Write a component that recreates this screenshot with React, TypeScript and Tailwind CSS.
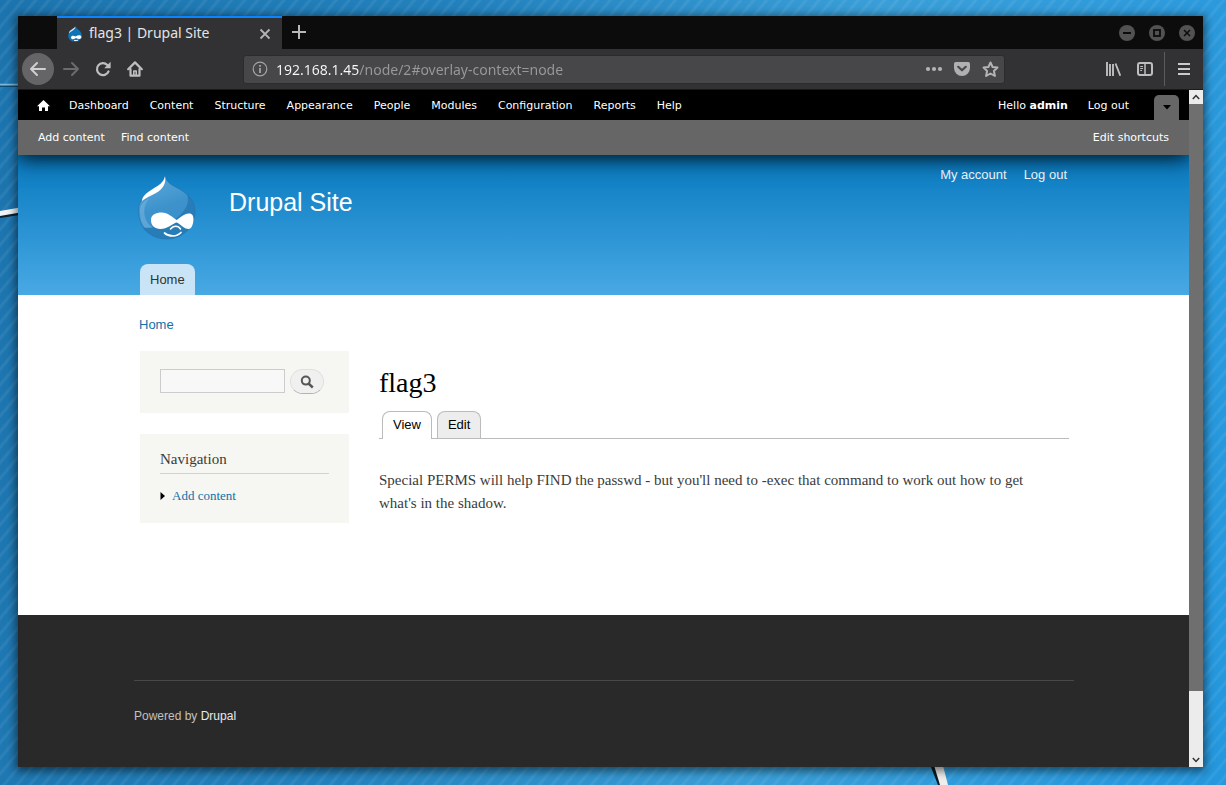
import type { ReactNode } from "react";

const adminLinks = ["Dashboard", "Content", "Structure", "Appearance", "People", "Modules", "Configuration", "Reports", "Help"];

function Desktop() {
  return (
    <div aria-hidden="true" className="absolute inset-0 -z-10 overflow-hidden bg-[linear-gradient(100deg,#1c74ae_0%,#2382be_35%,#3a9fd8_65%,#2497de_100%)]">
      <div className="absolute inset-0 bg-[repeating-linear-gradient(130deg,rgba(255,255,255,0)_0px,rgba(255,255,255,0)_5px,rgba(255,255,255,0.07)_7px,rgba(255,255,255,0.07)_8px,rgba(255,255,255,0)_10px)]" />
      <svg className="absolute top-0 left-0" width="40" height="230" viewBox="0 0 40 230">
        <path d="M0 84.500 H40" stroke="#7db9dc" strokeWidth="1.500" />
        <path d="M0 86.500 H40" stroke="#0d4a74" strokeWidth="1" />
        <path d="M0 215 L40 209 V212 L0 218 Z" fill="#0a2233" />
        <path d="M0 211 L40 204 V209 L0 216 Z" fill="#f4f4f4" />
      </svg>
      <svg className="absolute bottom-0 left-[920px]" width="40" height="30" viewBox="0 0 40 30">
        <path d="M9 7 L18 30 H24 L14 7 Z" fill="#0a1a26" />
        <path d="M13 7 L20 30 H28 L22 7 Z" fill="#f1efee" />
      </svg>
    </div>
  );
}

function Favicon() {
  return (
    <svg width="16" height="16" viewBox="0 0 16 16">
      <path d="M8.500 0.500 C9 2.500 14.800 4.600 14.800 9.400 C14.800 13.200 11.800 15.600 8 15.600 C4.200 15.600 1.200 13.200 1.200 9.400 C1.200 5 7.500 3.800 8.500 .5 Z" fill="#0f73b8" />
      <path d="M8.300 .6 C8.800 4 5 4.400 2 7.400 C2 3.800 7.200 3 8.300 .6 Z" fill="#d5ebf8" />
      <path d="M4 11.400 C4 9.400 6.600 9.200 8.600 10.400 C11 9 14.400 8.800 14.400 11 C14.400 13.400 11.400 13.400 9 12 C7 13.600 4 13.600 4 11.400 Z" fill="#fff" />
      <path d="M7 14.200 C8.200 14.800 10 14.800 11.200 14" stroke="#fff" fill="none" />
    </svg>
  );
}

function DrupalLogo() {
  return (
    <svg width="60" height="66" viewBox="0 0 60 66">
      <defs>
        <linearGradient id="drop" x1="0.3" y1="0" x2="0.6" y2="1">
          <stop offset="0" stopColor="#5aa7d8" />
          <stop offset="0.5" stopColor="#3d92cc" />
          <stop offset="1" stopColor="#3a90ca" />
        </linearGradient>
      </defs>
      <path d="M28 2 C29 9 37 12 44 16 C52 21 58 28 58 37 C58 54 45 65 29.500 65 C14 65 1.500 54 1.500 37 C1.500 29 5 24 10 20 C17 14 26 11 28 2 Z" fill="url(#drop)" stroke="#2073ab" strokeOpacity="0.6" />
      <path d="M50 20 C55 25 58 30 58 37 C58 54 45 65 29.500 65 C19 65 10 60 5.500 53 C18 54 32 51 41 43 C49 36 53 28 50 20 Z" fill="#2173ae" fillOpacity="0.7" />
      <path d="M3 36 C2.500 43 4 49 8 54 H16 C9 49 6.500 42 7.500 34 C8 30 10 27 13 24 C6 27 3 31 3 36 Z" fill="#8cc4e6" fillOpacity="0.4" />
      <path d="M28 2 C29.500 9 26 15 19 19 C14 22 9 23.500 5 27 C5 21 12 17.500 18 13.500 C24 10 27 7 28 2 Z" fill="#fff" />
      <path d="M14 46 C14 40.500 19 38.500 24.500 38.500 C31 38.500 35 43 39.500 46 C44 43 47 40 51.500 39.500 C55 39 56.500 41.500 56.500 45 C56.500 50 54.500 55 51.500 55 C47 55 43 49.500 39.500 48.500 C36 49.500 30 55 23.500 55 C17.500 55 14 51.500 14 46 Z" fill="#fff" />
      <path d="M33.500 55 C36 51.500 41 51 43.500 55" fill="none" stroke="#fff" strokeWidth="1.500" strokeLinecap="round" />
      <path d="M27.500 59 C32 63 40 63 44 58.500" fill="none" stroke="#fff" strokeWidth="1.700" strokeLinecap="round" />
    </svg>
  );
}

function IconButton({ label, className, children }: { label: string; className?: string; children: ReactNode }) {
  return (
    <button type="button" aria-label={label} className={`flex h-8 w-8 shrink-0 items-center justify-center ${className ?? ""}`}>
      {children}
    </button>
  );
}

function TabStrip() {
  return (
    <div className="flex h-[33px] bg-[#0c0c0d] pl-[39px]">
      <div className="flex w-[225px] items-center border-t-2 border-[#0a84ff] bg-[#323234] pl-[10px]">
        <Favicon />
        <span className="ml-[6px] flex-1 pb-[2px] text-[14px] leading-5 text-[#e4e4e6]">flag3 | Drupal Site</span>
        <IconButton label="Close tab" className="mr-px">
          <svg width="12" height="12" viewBox="0 0 12 12" stroke="#b4b4b6" strokeWidth="1.800"><path d="M1.500 1.500 L10.500 10.500 M10.500 1.500 L1.500 10.500" /></svg>
        </IconButton>
      </div>
      <IconButton label="New tab" className="ml-px">
        <svg width="16" height="16" viewBox="0 0 16 16" stroke="#b8b8ba" strokeWidth="2"><path d="M8 1 V15 M1 8 H15" /></svg>
      </IconButton>
      <div className="mr-2 ml-auto flex items-center gap-[14px]">
        <button type="button" aria-label="Minimize" className="h-4 w-4">
          <svg width="16" height="16" viewBox="0 0 16 16"><circle cx="8" cy="8" r="8" fill="#525253" /><path d="M4 8 H12" stroke="#0c0c0d" strokeWidth="2" /></svg>
        </button>
        <button type="button" aria-label="Maximize" className="h-4 w-4">
          <svg width="16" height="16" viewBox="0 0 16 16"><circle cx="8" cy="8" r="8" fill="#525253" /><rect x="5" y="5" width="6" height="6" fill="none" stroke="#0c0c0d" strokeWidth="1.800" /></svg>
        </button>
        <button type="button" aria-label="Close" className="h-4 w-4">
          <svg width="16" height="16" viewBox="0 0 16 16"><circle cx="8" cy="8" r="8" fill="#525253" /><path d="M5 5 L11 11 M11 5 L5 11" stroke="#0c0c0d" strokeWidth="1.500" /></svg>
        </button>
      </div>
    </div>
  );
}

function NavBar() {
  return (
    <div className="flex h-[41px] items-center border-b border-[#1a1a1c] bg-[#323234] pr-[3px] pl-1">
      <button type="button" aria-label="Back" className="flex h-8 w-8 shrink-0 items-center justify-center rounded-full bg-[#656567]">
        <svg width="18" height="16" viewBox="0 0 18 16" fill="none" stroke="#cfcfd1" strokeWidth="2" strokeLinecap="round" strokeLinejoin="round"><path d="M16 8 H2 M8 2 L2 8 L8 14" /></svg>
      </button>
      <IconButton label="Forward" className="ml-px">
        <svg width="18" height="16" viewBox="0 0 18 16" fill="none" stroke="#6c6c6f" strokeWidth="2" strokeLinecap="round" strokeLinejoin="round"><path d="M2 8 H16 M10 2 L16 8 L10 14" /></svg>
      </IconButton>
      <IconButton label="Reload">
        <svg width="16" height="16" viewBox="0 0 16 16"><path d="M13.500 10.500 A6 6 0 1 1 12.300 4" fill="none" stroke="#bebec0" strokeWidth="2.200" strokeLinecap="round" /><path d="M15.600 .8 V7.200 H9.200 Z" fill="#bebec0" /></svg>
      </IconButton>
      <IconButton label="Home">
        <svg width="16" height="16" viewBox="0 0 16 16" fill="none" stroke="#bebec0" strokeWidth="2.200" strokeLinejoin="round" strokeLinecap="round"><path d="M1.200 8.200 L8 1.400 L14.800 8.200" /><path d="M3.500 8 V14.700 H12.500 V8" /><path d="M6.800 14.500 V10 H9.200 V14.500" strokeWidth="1.600" /></svg>
      </IconButton>
      <div className="mr-[92px] ml-[92px] flex h-[29px] flex-1 items-center rounded-[3px] border border-[#2b2b2d] bg-[#474749] pl-2">
        <svg width="16" height="16" viewBox="0 0 16 16" fill="none" stroke="#a3a3a5"><circle cx="8" cy="8" r="6.800" strokeWidth="1.200" /><path d="M8 7 V12 M8 4 V5.800" strokeWidth="1.800" /></svg>
        <input
          type="text"
          aria-label="Address"
          defaultValue="192.168.1.45/node/2#overlay-context=node"
          className="ml-2 min-w-0 flex-1 bg-[linear-gradient(to_right,#f9f9fa_83px,#99999c_83px)] bg-clip-text text-[14px] text-transparent outline-none"
        />
        <div className="flex">
          <button type="button" aria-label="Page actions" className="flex h-7 w-7 items-center justify-center">
            <svg width="18" height="16" viewBox="0 0 18 16" fill="#b4b4b7"><circle cx="3" cy="8" r="2.100" /><circle cx="9" cy="8" r="2.100" /><circle cx="15" cy="8" r="2.100" /></svg>
          </button>
          <button type="button" aria-label="Save to Pocket" className="flex h-7 w-7 items-center justify-center">
            <svg width="16" height="16" viewBox="0 0 16 16"><path d="M1.800 1 H14.200 A1.800 1.800 0 0 1 16 2.800 V7 A8 8 0 0 1 0 7 V2.800 A1.800 1.800 0 0 1 1.800 1 Z" fill="#b0b0b3" /><path d="M4.200 5.800 L8 9.300 L11.800 5.800" fill="none" stroke="#474749" strokeWidth="2.200" strokeLinecap="round" strokeLinejoin="round" /></svg>
          </button>
          <button type="button" aria-label="Bookmark this page" className="flex h-7 w-7 items-center justify-center">
            <svg width="17" height="17" viewBox="0 0 17 17"><path d="M8.500 1.500 L10.600 6 L15.500 6.600 L11.900 10 L12.900 15 L8.500 12.500 L4.100 15 L5.100 10 L1.500 6.600 L6.400 6 Z" fill="none" stroke="#b4b4b7" strokeWidth="2" strokeLinejoin="round" /></svg>
          </button>
        </div>
      </div>
      <IconButton label="Library">
        <svg width="16" height="16" viewBox="0 0 16 16" stroke="#bebec0" strokeWidth="1.900"><path d="M2 1 V15 M5 3 V15 M8 3 V15 M10.500 2.500 L15.300 14.700" /></svg>
      </IconButton>
      <IconButton label="Sidebars">
        <svg width="16" height="16" viewBox="0 0 16 16" fill="none" stroke="#bebec0"><rect x="1" y="2" width="14" height="12" rx="2" strokeWidth="2" /><path d="M8 2 V14" strokeWidth="1.500" /><path d="M3.200 5.500 H6 M3.200 7.500 H6 M3.200 9.500 H5" strokeWidth="1" /></svg>
      </IconButton>
      <div className="mx-[3px] h-[34px] w-px bg-[#5c5c5f]" />
      <IconButton label="Menu">
        <svg width="12" height="14" viewBox="0 0 12 14" stroke="#cacacc" strokeWidth="2"><path d="M0 2 H12 M0 7 H12 M0 12 H12" /></svg>
      </IconButton>
    </div>
  );
}

function AdminToolbar() {
  return (
    <div className="relative z-10 font-['DejaVu_Sans',sans-serif] text-[11px] leading-4 text-white shadow-[0_3px_20px_rgba(0,0,0,0.9)]">
      <div className="flex h-[30px] items-center bg-black px-[10px] pt-px">
        <a href="#home" aria-label="Home" className="px-[9px]">
          <svg width="13" height="11" viewBox="0 0 13 11" fill="#fff"><path d="M6.500 0 L13 6.200 H11 V11 H8 V7.500 H5 V11 H2 V6.200 H0 Z" /></svg>
        </a>
        <nav className="flex flex-1 gap-[21px] pl-[10px]">
          {adminLinks.map((name) => (
            <a key={name} href="#admin">{name}</a>
          ))}
        </nav>
        <a href="#user" className="px-[10px]">Hello <b>admin</b></a>
        <a href="#logout" className="px-[10px]">Log out</a>
        <button type="button" aria-label="Hide shortcuts" className="ml-[15px] flex h-[25px] w-[25px] items-center justify-center self-end rounded-t-[5px] bg-[#666]">
          <svg width="8" height="5" viewBox="0 0 8 5"><path d="M0 0 H8 L4 4.500 Z" fill="#000" /></svg>
        </button>
      </div>
      <div className="flex h-[35px] items-center gap-4 bg-[#666] px-5">
        <a href="#add">Add content</a>
        <a href="#find">Find content</a>
        <a href="#shortcuts" className="ml-auto">Edit shortcuts</a>
      </div>
    </div>
  );
}

function SiteHeader() {
  return (
    <header className="bg-[linear-gradient(to_bottom,#0779bf,#48a9e4)] font-['Liberation_Sans',sans-serif]">
      <div className="mx-auto flex h-[140px] w-full max-w-[941px] flex-col justify-between pr-[7px] pl-1">
        <div className="flex items-start">
          <a href="#front" aria-label="Drupal Site home" className="mt-[19px]"><DrupalLogo /></a>
          <a href="#front" className="mt-8 ml-8 text-[25px] leading-[30px] text-[#fffeff]">Drupal Site</a>
          <nav className="mt-[10px] ml-auto flex gap-[17px] text-[13px] leading-5 text-[#f4fbff]">
            <a href="#account">My account</a>
            <a href="#logout">Log out</a>
          </nav>
        </div>
        <nav className="flex pl-[3px]">
          <a href="#front" className="rounded-t-lg bg-[#c8e4f6] px-[10px] pt-[6px] pb-[5px] text-[13px] leading-5 text-[#333]">Home</a>
        </nav>
      </div>
    </header>
  );
}

function Sidebar() {
  return (
    <aside className="flex w-[209px] shrink-0 flex-col gap-[21px]">
      <form className="flex h-[62px] items-start gap-[5px] bg-[#f6f6f2] px-5 pt-[18px]">
        <input type="text" aria-label="Search" className="h-6 w-[125px] border border-[#ccc] bg-[#f8f8f8] px-1 outline-none" />
        <button type="button" aria-label="Search site" className="flex h-[25px] w-[34px] items-center justify-center rounded-full border border-[#e0e0e0] border-b-[#b4b4b4] bg-[#f0f0f0]">
          <svg width="14" height="14" viewBox="0 0 14 14" fill="none" stroke="#565656"><circle cx="5.800" cy="5.600" r="4" strokeWidth="2" /><path d="M8.500 8.500 L12.800 12.500" strokeWidth="2.400" /></svg>
        </button>
      </form>
      <section className="bg-[#f6f6f2] px-5 pt-[15px] pb-[17px]">
        <h2 className="border-b border-[#d2d2ce] pb-1 text-[15px] leading-5 text-[#3b3b3b]">Navigation</h2>
        <a href="#add" className="mt-3 flex items-center gap-[7px] text-[13px] leading-5 text-[#0e72ab]">
          <svg width="5" height="8" viewBox="0 0 5 8"><path d="M.5 0 L5 4 L.5 8 Z" fill="#000" /></svg>
          Add content
        </a>
      </section>
    </aside>
  );
}

function Article() {
  return (
    <main className="flex-1 pt-[14px]">
      <h1 className="text-[28px] leading-9 text-black">flag3</h1>
      <nav className="mt-[10px] flex items-end gap-[5px] border-b border-[#bbb] pl-[3px] font-['Liberation_Sans',sans-serif] text-[13px] leading-5 text-black">
        <a href="#view" className="-mb-px rounded-t-lg border border-b-0 border-[#bbb] bg-white px-[10px] pt-[3px] pb-1">View</a>
        <a href="#edit" className="rounded-t-lg border border-b-0 border-[#bbb] bg-[#ededed] px-[10px] pt-[3px] pb-[3px]">Edit</a>
      </nav>
      <p className="mt-[30px] pr-6 text-[15px] leading-[23px] text-[#3b3b3b]">
        Special PERMS will help FIND the passwd - but you'll need to -exec that command to work out how to get what's in the shadow.
      </p>
    </main>
  );
}

function Scrollbar() {
  return (
    <div className="flex w-[14px] shrink-0 flex-col bg-[#ececec]">
      <button type="button" aria-label="Scroll up" className="flex h-[14px] items-center justify-center">
        <svg width="8" height="6" viewBox="0 0 8 6" fill="none" stroke="#333" strokeWidth="1.500"><path d="M.8 5 L4 1.500 L7.200 5" /></svg>
      </button>
      <div className="grow-[587] bg-[#6f6f6f]" />
      <div className="grow-[62]" />
      <button type="button" aria-label="Scroll down" className="flex h-[14px] items-center justify-center">
        <svg width="8" height="6" viewBox="0 0 8 6" fill="none" stroke="#333" strokeWidth="1.500"><path d="M.8 1 L4 4.500 L7.200 1" /></svg>
      </button>
    </div>
  );
}

export default function App() {
  return (
    <div className="relative isolate flex min-h-screen flex-col pt-4 pr-[23px] pb-[18px] pl-[18px] font-['Noto_Sans',sans-serif]">
      <Desktop />
      <div className="flex flex-1 flex-col shadow-[0_2px_9px_2px_rgba(0,0,0,0.55)]">
        <TabStrip />
        <NavBar />
        <div className="flex flex-1">
          <div className="flex min-w-0 flex-1 flex-col overflow-hidden bg-[#292929] font-['Liberation_Serif',serif]">
            <AdminToolbar />
            <SiteHeader />
            <div className="bg-white">
              <div className="mx-auto w-full max-w-[941px] pt-5 pr-[5px] pb-[92px] pl-[6px]">
                <a href="#front" className="block font-['Liberation_Sans',sans-serif] text-[13px] leading-5 text-[#0e72ab]">Home</a>
                <div className="mt-4 flex items-start gap-[30px] pl-px">
                  <Sidebar />
                  <Article />
                </div>
              </div>
            </div>
            <footer className="mx-auto w-full max-w-[941px] flex-1 pt-[65px] pb-[41px] pl-px font-['Liberation_Sans',sans-serif] text-[12px] leading-5 text-[#c0c0c0]">
              <div className="border-t border-[#484848] pt-[25px]">
                Powered by <a href="#drupal" className="text-white/90">Drupal</a>
              </div>
            </footer>
          </div>
          <Scrollbar />
        </div>
      </div>
    </div>
  );
}
